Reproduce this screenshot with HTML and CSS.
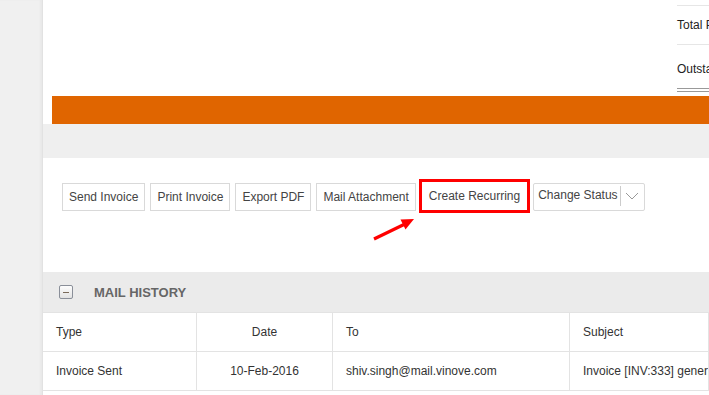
FILE: index.html
```html
<!DOCTYPE html>
<html lang="en">
<head>
    <meta charset="UTF-8">
    <meta name="viewport" content="width=device-width, initial-scale=1.0">
    <title>Invoice</title>
    <link rel="stylesheet" href="styles.css">
</head>
<body>
    <div class="sidebar"></div>

    <div class="panel">
        <div class="summary-area">
            <div class="summary">
                <div class="summary-row">Total Paid</div>
                <div class="summary-row last">Outstanding</div>
            </div>
        </div>

        <div class="orange-bar"></div>
        <div class="gray-band"></div>

        <div class="actions">
            <button class="action-btn">Send Invoice</button>
            <button class="action-btn">Print Invoice</button>
            <button class="action-btn">Export PDF</button>
            <button class="action-btn">Mail Attachment</button>
            <button class="action-btn highlight">Create Recurring</button>
            <div class="status-select">
                <span class="status-label">Change Status</span>
                <span class="status-arrow">
                    <svg width="14" height="8" viewBox="0 0 14 8"><path d="M1 1 L7 7 L13 1" fill="none" stroke="#999" stroke-width="1"/></svg>
                </span>
            </div>

            <!-- annotation arrow -->
            <svg class="pointer" width="48" height="28" viewBox="0 0 48 28">
                <line x1="4" y1="24" x2="35" y2="9" stroke="#f00" stroke-width="3.2"/>
                <polygon points="44,4 35.5,14.5 30.5,4.5" fill="#f00"/>
            </svg>
        </div>

        <div class="section-head">
            <span class="toggle"><span class="minus"></span></span>
            <span class="section-title">MAIL HISTORY</span>
        </div>

        <table class="mail-table">
            <tr>
                <td class="col-type">Type</td>
                <td class="col-date">Date</td>
                <td class="col-to">To</td>
                <td>Subject</td>
            </tr>
            <tr>
                <td class="col-type">Invoice Sent</td>
                <td class="col-date">10-Feb-2016</td>
                <td class="col-to">shiv.singh@mail.vinove.com</td>
                <td>Invoice [INV:333] generated</td>
            </tr>
        </table>
    </div>
</body>
</html>
```

FILE: styles.css
```css
body {
    margin: 0;
    display: flex;
    height: 395px;
    overflow: hidden;
    background-color: #f0f0f0;
    font-family: "Liberation Sans", Arial, sans-serif;
    font-size: 12px;
    color: #333;
}

.sidebar {
    width: 42px;
    flex-shrink: 0;
    background-color: #f0f0f0;
    border-right: 1px solid #e2e2e2;
    box-shadow: inset -2px 0 2px rgba(0, 0, 0, 0.03);
}

.panel {
    flex: 1;
    background: #fff;
    overflow: hidden;
}

.summary-area {
    height: 96px;
    padding-left: 634px;
}

.summary {
    width: 200px;
    padding-top: 5px;
    color: #222;
}

.summary-row {
    height: 38px;
    line-height: 39px;
    border-top: 1px solid #e6e6e6;
    white-space: nowrap;
}

.summary-row.last {
    height: 43px;
    line-height: 49px;
    border-bottom: 4px double #999;
}

.orange-bar {
    height: 28px;
    margin-left: 9px;
    background-color: #e06500;
}

.gray-band {
    height: 34px;
    background-color: #efefef;
}

.actions {
    position: relative;
    height: 114px;
    box-sizing: border-box;
    padding: 21px 0 0 19px;
    display: flex;
    align-items: flex-start;
    gap: 5px;
}

.action-btn {
    margin-top: 4px;
    height: 28px;
    padding: 0 6px;
    background: #fff;
    border: 1px solid #d9d9d9;
    border-radius: 0;
    font-family: "Liberation Sans", Arial, sans-serif;
    font-size: 12px;
    color: #444;
    cursor: pointer;
}

.action-btn.highlight {
    margin-top: 0;
    margin-left: -2px;
    height: 34px;
    padding: 0 7px;
    border: 3px solid #f00;
}

.status-select {
    margin-top: 4px;
    margin-left: -2px;
    height: 26px;
    display: flex;
    border: 1px solid #d9d9d9;
    border-radius: 2px;
    color: #444;
}

.status-label {
    padding: 4px 2px 0 4px;
    white-space: nowrap;
}

.status-arrow {
    width: 23px;
    display: flex;
    align-items: center;
    justify-content: center;
    border-left: 1px solid #ccc;
    margin: 2px 0 4px;
}

.pointer {
    position: absolute;
    left: 327px;
    top: 57px;
}

.section-head {
    height: 40px;
    display: flex;
    align-items: center;
    padding-left: 16px;
    background-color: #ebebeb;
}

.toggle {
    width: 12px;
    height: 12px;
    border: 1px solid #8a8f99;
    border-radius: 2px;
    background: linear-gradient(#fdfdfd, #e2e2e2);
    display: flex;
    align-items: center;
    justify-content: center;
}

.minus {
    width: 6px;
    height: 1px;
    background-color: #7a6a5a;
}

.section-title {
    margin-left: 21px;
    font-size: 13px;
    font-weight: bold;
    color: #666;
}

.mail-table {
    width: 100%;
    border-collapse: collapse;
    table-layout: fixed;
}

.mail-table td {
    height: 38px;
    padding: 0 0 0 13px;
    border: 1px solid #e3e3e3;
    color: #333;
    white-space: nowrap;
    overflow: hidden;
}

.mail-table td:first-child {
    border-left: none;
}

.col-type {
    width: 140px;
}

.mail-table td.col-date {
    width: 135px;
    padding: 0;
    text-align: center;
}

.col-to {
    width: 223px;
}
```
